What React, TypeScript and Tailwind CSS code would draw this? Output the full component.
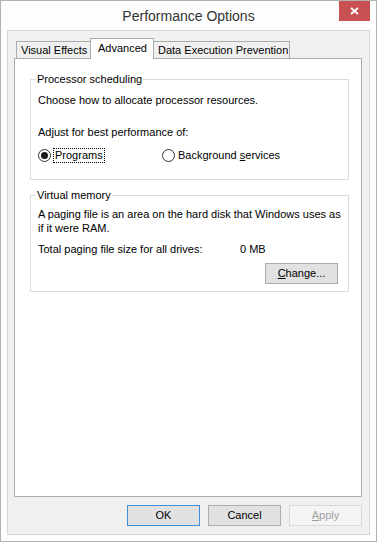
import React from "react";

function Radio({ checked }: { checked?: boolean }) {
  return (
    <span className="w-[13px] h-[13px] rounded-full border border-[#333] bg-white flex items-center justify-center shrink-0">
      {checked && <span className="w-[7px] h-[7px] rounded-full bg-[#1a1a1a]" />}
    </span>
  );
}

function Button({ children, variant }: { children: React.ReactNode; variant?: "default" | "disabled" }) {
  const look =
    variant === "default"
      ? "border-[#3c8fdc] bg-[#e1e1e1] text-black"
      : variant === "disabled"
      ? "border-[#d9d9d9] bg-[#f4f4f4] text-[#a0a0a0]"
      : "border-[#adadad] bg-[#e1e1e1] text-black";
  return (
    <button className={`w-[73px] h-[21px] border flex items-center justify-center ${look}`}>{children}</button>
  );
}

export default function App() {
  return (
    <div className="w-[377px] h-[542px] bg-[#fdfdfd] border border-[#b1b1b1] flex flex-col font-['Liberation_Sans',Arial,sans-serif] text-[11px] leading-[15px] text-black">
      {/* title bar */}
      <div className="relative h-[29px] flex items-center justify-center">
        <span className="text-[14px] text-[#333] pt-[2px]">Performance Options</span>
        <button className="absolute top-0 right-[6px] w-[31px] h-[20px] bg-[#c75050] flex items-center justify-center">
          <svg width="9" height="8" viewBox="0 0 9 8">
            <path d="M1 1 L8 7 M8 1 L1 7" stroke="white" strokeWidth="1.8" />
          </svg>
        </button>
      </div>

      {/* client area */}
      <div className="mx-[6px] mb-[6px] flex-1 border border-[#d6d6d6] bg-[#f0f0f0] flex flex-col pl-[6px] pr-[7px] pt-[7px] pb-[8px]">
        <div className="flex items-end h-[21px] relative z-10 -mb-px pl-[2px]">
          <div className="w-[75px] h-[18px] border border-[#acacac] bg-[#f0f0f0] flex items-center pl-[4px]">Visual Effects</div>
          <div className="w-[64px] h-[21px] -ml-px border border-b-0 border-[#acacac] bg-white flex items-center pl-[7px] pb-[2px] relative z-10">
            Advanced
          </div>
          <div className="w-[137px] h-[18px] -ml-px border border-[#acacac] bg-[#f0f0f0] flex items-center pl-[4px]">
            Data Execution Prevention
          </div>
        </div>

        <div className="flex-1 bg-white border border-[#acacac] pl-[15px] pr-[12px] pt-[13px]">
          <fieldset className="border border-[#dcdcdc]">
            <legend className="ml-[5px] px-[1px]">Processor scheduling</legend>
            <div className="pl-[7px] pb-[16px]">
              <div className="pt-[6px]">Choose how to allocate processor resources.</div>
              <div className="mt-[17px]">Adjust for best performance of:</div>
              <div className="mt-[8px] flex items-center">
                <div className="w-[124px] flex items-center gap-[2px]">
                  <Radio checked />
                  <span className="border border-dotted border-black px-[1px] leading-[13px]">Programs</span>
                </div>
                <div className="flex items-center gap-[3px]">
                  <Radio />
                  <span>
                    Background <u>s</u>ervices
                  </span>
                </div>
              </div>
            </div>
          </fieldset>

          <fieldset className="mt-[8px] border border-[#dcdcdc]">
            <legend className="ml-[5px] px-[1px]">Virtual memory</legend>
            <div className="pl-[7px] pb-[7px]">
              <p className="pt-[4px] leading-[14px]">
                A paging file is an area on the hard disk that Windows uses as if it were RAM.
              </p>
              <div className="mt-[7px] flex">
                <span className="w-[202px]">Total paging file size for all drives:</span>
                <span>0 MB</span>
              </div>
              <div className="mt-[6px] pr-[10px] flex justify-end">
                <Button>
                  <span>
                    <u>C</u>hange...
                  </span>
                </Button>
              </div>
            </div>
          </fieldset>
        </div>

        <div className="mt-[8px] flex justify-end gap-[8px]">
          <Button variant="default">OK</Button>
          <Button>Cancel</Button>
          <Button variant="disabled">
            <span>
              <u>A</u>pply
            </span>
          </Button>
        </div>
      </div>
    </div>
  );
}
